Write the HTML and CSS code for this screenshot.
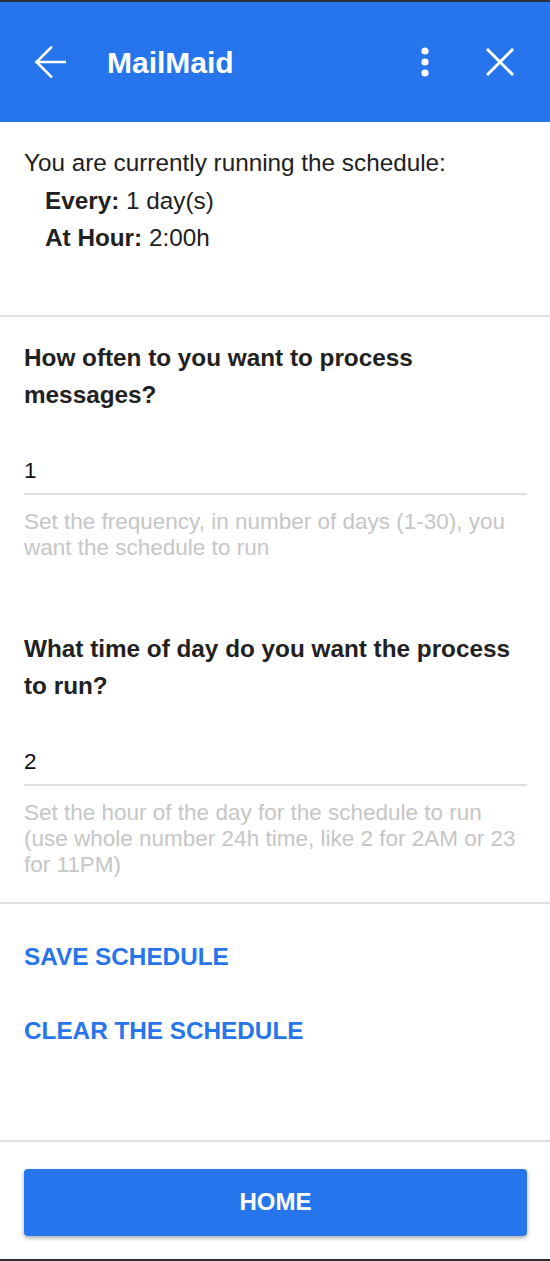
FILE: index.html
```html
<!DOCTYPE html>
<html>
<head>
<meta charset="utf-8">
<link rel="stylesheet" href="styles.css">
</head>
<body>
<div class="frame">
  <header class="appbar">
    <svg class="icon-back" width="31" height="32" viewBox="0 0 31 32"><path d="M1.5 16H30M16 1.5L1.5 16L16 30.5" fill="none" stroke="#fff" stroke-width="2.6" stroke-linecap="square"/></svg>
    <div class="title">MailMaid</div>
    <svg class="icon-more" width="8" height="30" viewBox="0 0 8 30"><circle cx="4" cy="4" r="3.6" fill="#fff"/><circle cx="4" cy="15" r="3.6" fill="#fff"/><circle cx="4" cy="26" r="3.6" fill="#fff"/></svg>
    <svg class="icon-close" width="28" height="28" viewBox="0 0 28 28"><path d="M2 2L26 26M26 2L2 26" fill="none" stroke="#fff" stroke-width="3" stroke-linecap="square"/></svg>
  </header>

  <section class="current">
    <div class="line">You are currently running the schedule:</div>
    <div class="line indent"><b>Every:</b> 1 day(s)</div>
    <div class="line indent"><b>At Hour:</b> 2:00h</div>
  </section>

  <section class="form">
    <div class="question">How often to you want to process messages?</div>
    <div class="field">1</div>
    <div class="hint">Set the frequency, in number of days (1-30), you want the schedule to run</div>

    <div class="question q2">What time of day do you want the process to run?</div>
    <div class="field">2</div>
    <div class="hint">Set the hour of the day for the schedule to run (use whole number 24h time, like 2 for 2AM or 23 for 11PM)</div>
  </section>

  <section class="actions">
    <div class="link">SAVE SCHEDULE</div>
    <div class="link link2">CLEAR THE SCHEDULE</div>
  </section>

  <footer class="footer">
    <div class="home">HOME</div>
  </footer>
</div>
</body>
</html>
```

FILE: styles.css
```css
html, body {
  margin: 0;
  padding: 0;
  background: #fff;
}
body {
  font-family: "Liberation Sans", Arial, sans-serif;
  color: #212121;
}
.frame {
  height: 1261px;
  box-sizing: border-box;
  border-top: 2px solid #2b2e34;
  border-bottom: 2px solid #2b2e34;
  display: flex;
  flex-direction: column;
}
.appbar {
  height: 120px;
  flex: none;
  background: #2775ec;
  display: flex;
  align-items: center;
  padding: 0 36px 0 35px;
}
.icon-back { flex: none; }
.title {
  color: #fff;
  font-weight: bold;
  font-size: 30px;
  margin-left: 41px;
  flex: 1;
  margin-top: 2px;
}
.icon-more { flex: none; margin-right: 57px; }
.icon-close { flex: none; }

.current {
  padding: 22px 24px 58px;
  border-bottom: 2px solid #e0e0e0;
  font-size: 24.3px;
}
.line { line-height: 37.5px; }
.indent { padding-left: 21px; }
.indent b { font-weight: bold; }

.form {
  padding: 22px 23px 24px 24px;
  border-bottom: 2px solid #e0e0e0;
}
.question {
  font-size: 24.3px;
  font-weight: bold;
  line-height: 37px;
}
.q2 { margin-top: 69px; }
.field {
  margin-top: 43px;
  font-size: 22.5px;
  line-height: 30px;
  padding-bottom: 7px;
  border-bottom: 2px solid #e0e0e0;
  color: #111;
}
.hint {
  margin-top: 14px;
  padding-right: 10px;
  font-size: 22.5px;
  line-height: 26px;
  color: #c6c6c6;
}

.actions {
  padding: 35px 24px 0;
  height: 238px;
  flex: none;
  border-bottom: 2px solid #e0e0e0;
  box-sizing: border-box;
}
.link {
  font-size: 24.3px;
  font-weight: bold;
  color: #2775ec;
  line-height: 36px;
}
.link2 { margin-top: 38px; }

.footer {
  padding: 27px 23px 0 24px;
}
.home {
  height: 67px;
  background: #2775ec;
  border-radius: 4px;
  box-shadow: 0 2px 4px rgba(0,0,0,0.35);
  color: #fff;
  font-weight: bold;
  font-size: 24px;
  display: flex;
  align-items: center;
  justify-content: center;
}
```
